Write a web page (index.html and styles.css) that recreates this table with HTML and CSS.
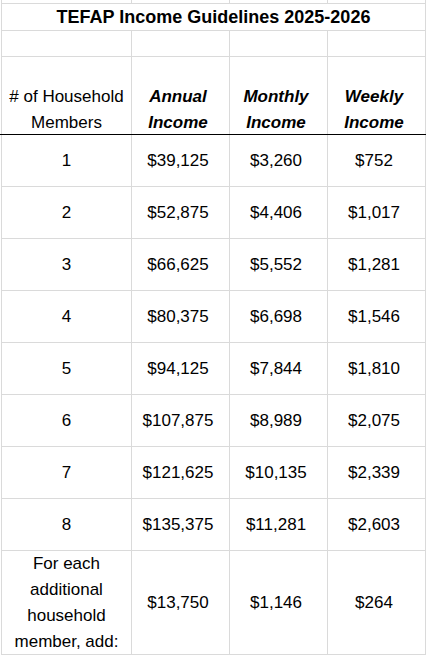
FILE: index.html
```html
<!DOCTYPE html>
<html lang="en">
<head>
<meta charset="utf-8">
<title>TEFAP Income Guidelines 2025-2026</title>
<link rel="stylesheet" href="styles.css">
</head>
<body>
<div class="sheet">
  <div class="grid grid-top">
    <div class="cell"></div><div class="cell"></div><div class="cell"></div><div class="cell"></div>
    <div class="cell title">TEFAP Income Guidelines 2025-2026</div>
    <div class="cell"></div><div class="cell"></div><div class="cell"></div><div class="cell"></div>
    <div class="cell head"><div class="head-text">#&nbsp;of Household<br>Members</div></div>
    <div class="cell head num"><div class="head-text bi">Annual<br>Income</div></div>
    <div class="cell head num"><div class="head-text bi">Monthly<br>Income</div></div>
    <div class="cell head num"><div class="head-text bi">Weekly<br>Income</div></div>
  </div>
  <div class="rule"></div>
  <div class="grid grid-body">
    <div class="cell val">1</div><div class="cell val num">$39,125</div><div class="cell val num">$3,260</div><div class="cell val num">$752</div>
    <div class="cell val">2</div><div class="cell val num">$52,875</div><div class="cell val num">$4,406</div><div class="cell val num">$1,017</div>
    <div class="cell val">3</div><div class="cell val num">$66,625</div><div class="cell val num">$5,552</div><div class="cell val num">$1,281</div>
    <div class="cell val">4</div><div class="cell val num">$80,375</div><div class="cell val num">$6,698</div><div class="cell val num">$1,546</div>
    <div class="cell val">5</div><div class="cell val num">$94,125</div><div class="cell val num">$7,844</div><div class="cell val num">$1,810</div>
    <div class="cell val">6</div><div class="cell val num">$107,875</div><div class="cell val num">$8,989</div><div class="cell val num">$2,075</div>
    <div class="cell val">7</div><div class="cell val num">$121,625</div><div class="cell val num">$10,135</div><div class="cell val num">$2,339</div>
    <div class="cell val">8</div><div class="cell val num">$135,375</div><div class="cell val num">$11,281</div><div class="cell val num">$2,603</div>
    <div class="cell val extra">For each<br>additional<br>household<br>member, add:</div><div class="cell val num">$13,750</div><div class="cell val num">$1,146</div><div class="cell val num">$264</div>
  </div>
</div>
</body>
</html>
```
FILE: styles.css
```css
html, body {
  margin: 0;
  padding: 0;
  background: #ffffff;
}

body {
  font-family: "Liberation Sans", Arial, sans-serif;
  font-size: 17px;
  color: #000000;
}

.sheet {
  width: 426px;
}

.grid {
  display: grid;
  grid-template-columns: 129px 97px 97px 97px;
  gap: 1px;
  background: #dadada;
  margin-left: 1px;
  padding: 0 1px;
  width: 424px;
  box-sizing: border-box;
  width: 425px;
}

.grid-top {
  grid-template-rows: 3px 26px 25px 77px;
}

.grid-body {
  grid-template-rows: repeat(8, 51px) 103px;
  padding-bottom: 1px;
}

.cell {
  background: #ffffff;
  display: flex;
  align-items: center;
  justify-content: center;
  text-align: center;
  min-width: 0;
}

.title {
  grid-column: 1 / -1;
  font-weight: bold;
  font-size: 18px;
  white-space: nowrap;
}

.head {
  align-items: flex-end;
}

.head-text {
  line-height: 26px;
  margin-bottom: -2px;
  white-space: nowrap;
}

.bi {
  font-weight: bold;
  font-style: italic;
}

.num {
  padding-right: 5px;
}

.rule {
  height: 1px;
  background: #000000;
  width: 426px;
}

.val {
  white-space: nowrap;
}

.extra {
  line-height: 26px;
  overflow: visible;
}
```
